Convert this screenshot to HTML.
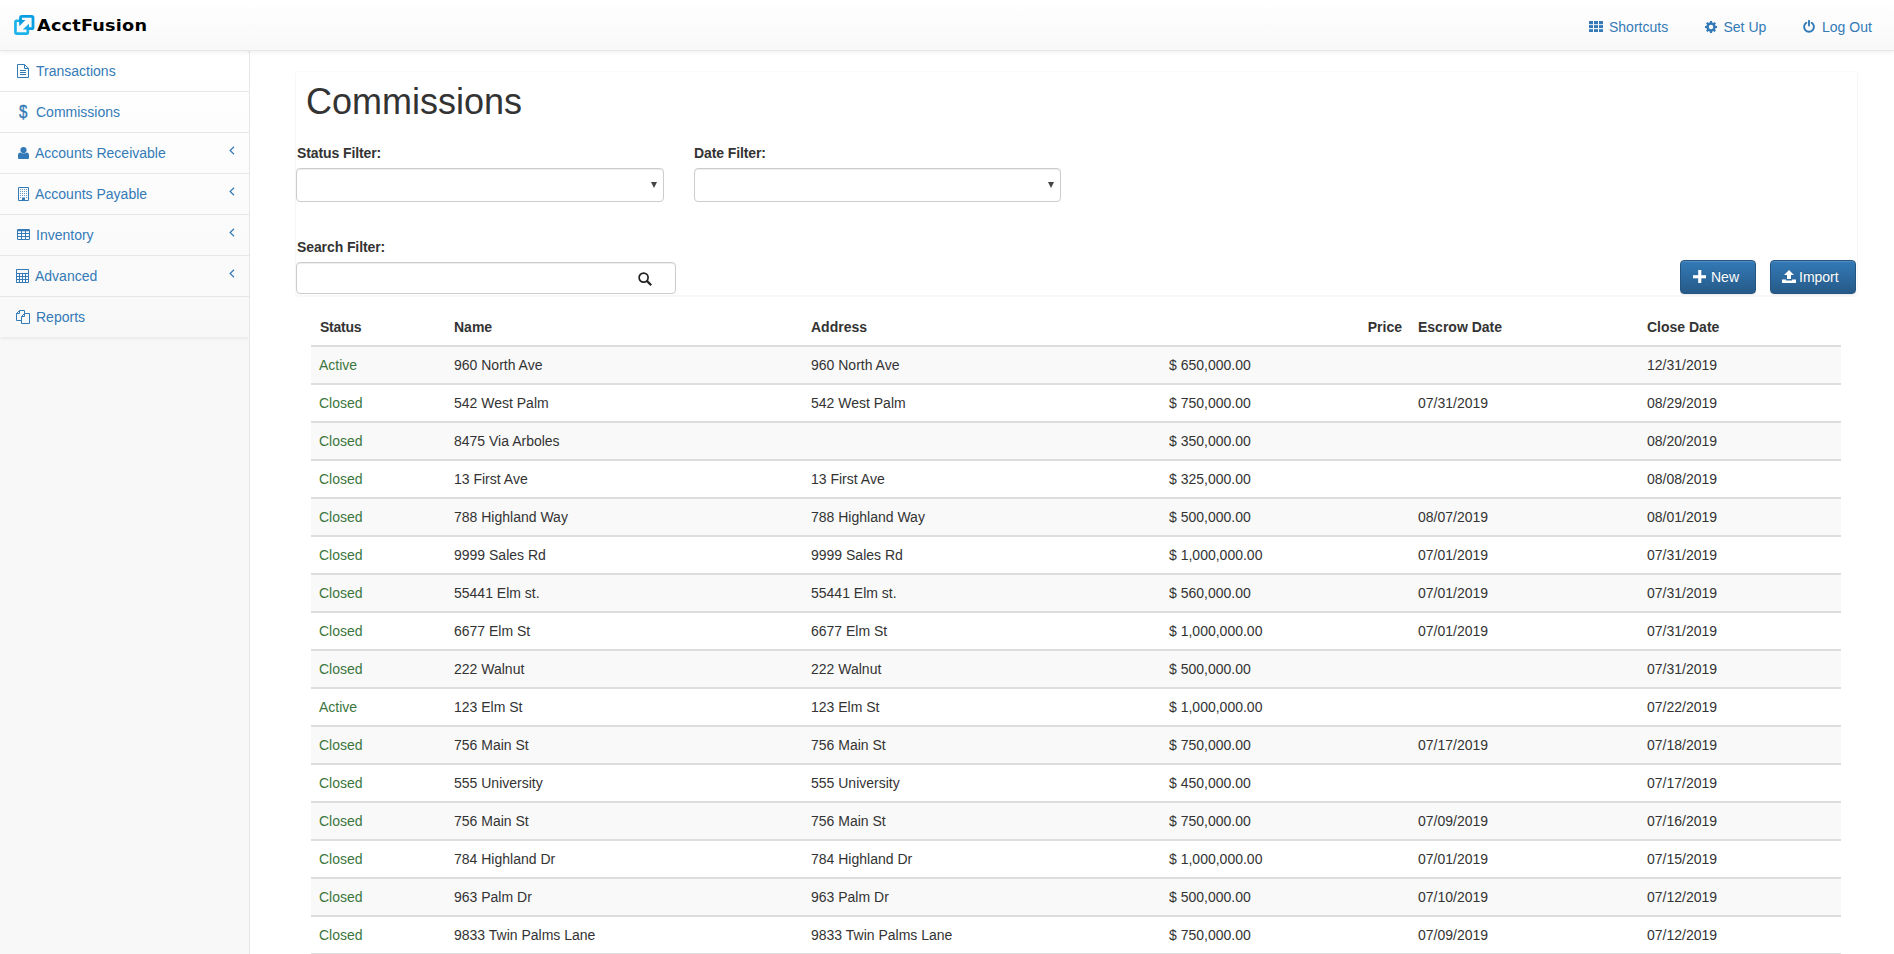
<!DOCTYPE html>
<html lang="en">
<head>
<meta charset="utf-8">
<title>AcctFusion - Commissions</title>
<style>
*{box-sizing:border-box}
html,body{margin:0;padding:0}
body{width:1894px;height:954px;overflow:hidden;background:#f8f8f8;font-family:"Liberation Sans",Arial,sans-serif;font-size:14px;line-height:20px;color:#333;position:relative}
a{color:#337ab7;text-decoration:none}
/* navbar */
#nav{z-index:10;position:absolute;left:0;top:0;width:1894px;height:51px;background:linear-gradient(to bottom,#fff 0,#f8f8f8 100%);border-bottom:1px solid #e7e7e7;box-shadow:inset 0 1px 0 rgba(255,255,255,.15),0 1px 5px rgba(0,0,0,.075)}
#brand{position:absolute;left:0;top:0;width:160px;height:50px;display:block}
#brand svg{position:absolute;left:0;top:0}
#brand span{position:absolute;left:37px;top:15px;font-family:"DejaVu Sans","Liberation Sans",sans-serif;font-weight:bold;font-size:16.5px;color:#000;letter-spacing:.2px;transform:scaleX(1.07);transform-origin:0 0;line-height:22px;white-space:nowrap}
#toplinks{position:absolute;left:0;top:0;width:1894px;height:50px;margin:0;padding:0;list-style:none}
#toplinks li{display:block}
#toplinks a{position:absolute;top:17px;line-height:20px;color:#337ab7;white-space:nowrap}
#toplinks svg{position:absolute}
/* sidebar */
#side{position:absolute;left:0;top:51px;width:249px;margin:0;padding:0;list-style:none;background:linear-gradient(to bottom,#fff 0,#f8f8f8 100%);border-radius:0 4px 0 0;box-shadow:0 1px 4px rgba(0,0,0,.09)}
#side li{display:block;height:41px;border-bottom:1px solid #e7e7e7;position:relative}
#side li a{display:block;padding:10px 15px;height:40px;line-height:20px;color:#337ab7;white-space:nowrap}
#side li svg{position:absolute;left:17px;top:13px}
#side li .t{position:absolute;top:10px}
#side li .arrow{position:absolute;left:229px;top:13px;width:6px;height:9px}
#side li .arrow svg{position:absolute;left:0;top:0}
/* page */
#page{position:absolute;left:249px;top:51px;width:1645px;height:903px;border-left:1px solid #e7e7e7;background:#fff}
#panel{position:absolute;left:295px;top:71px;width:1563px;height:225px;border:1px solid #f7f7f7;border-top-color:#fbfbfb;border-radius:4px;background:#fff;box-shadow:0 1px 1px rgba(0,0,0,.03)}
h1{position:absolute;left:306px;top:82px;margin:0;font-size:36px;line-height:40px;font-weight:500;font-weight:normal;color:#333}
label{position:absolute;letter-spacing:-.1px;font-weight:bold;font-size:14px;line-height:20px;color:#333}
.ctl{position:absolute;border:1px solid #ccc;border-radius:4px;background:#fff;box-shadow:inset 0 1px 1px rgba(0,0,0,.075)}
.ctl .caret{position:absolute;right:6px;top:13px;width:0;height:0;border-left:3.5px solid transparent;border-right:3.5px solid transparent;border-top:6px solid #444}
.btn{position:absolute;top:260px;height:34px;border:1px solid #245580;border-radius:4px;color:#fff;font-size:14px;line-height:20px;padding:6px 0;background:linear-gradient(to bottom,#337ab7 0,#265a88 100%);box-shadow:inset 0 1px 0 rgba(255,255,255,.15),0 1px 1px rgba(0,0,0,.075);text-shadow:0 -1px 0 rgba(0,0,0,.2);white-space:nowrap}
.btn svg{position:absolute}
.btn span{position:absolute;top:6px}
/* table */
table{position:absolute;left:311px;top:309px;width:1530px;border-bottom:2px solid #ddd;border-collapse:collapse;border-spacing:0;table-layout:fixed}
th,td{padding:8px;line-height:20px;text-align:left;vertical-align:top;white-space:nowrap;overflow:hidden}
th{font-weight:bold;vertical-align:bottom;border-bottom:2px solid #ddd;padding-left:9px}
tbody{border-top:2px solid #ddd}
tbody:nth-of-type(odd) tr{background:#f9f9f9}
td a{color:#3c763d}
</style>
</head>
<body>
<div id="nav">
  <a id="brand">
    <svg width="40" height="40" viewBox="0 0 40 40">
      <defs>
        <clipPath id="cb"><path clip-rule="evenodd" d="M0 0H40V40H0Z M16.800 22.600H26.400V32H16.800Z"/></clipPath>
        <clipPath id="cf"><path clip-rule="evenodd" d="M0 0H40V40H0Z M21.900 17.800H31.600V27.300H21.900Z"/></clipPath>
      </defs>
      <rect x="15.450" y="20.750" width="12.400" height="12.900" rx="1.300" fill="none" stroke="#1bb4ea" stroke-width="2.700" clip-path="url(#cf)"/>
      <rect x="20.500" y="16.400" width="12.500" height="12.300" rx="1.300" fill="none" stroke="#0b9ee1" stroke-width="2.800" clip-path="url(#cb)"/>
      <path d="M19.100 19.800L25.500 20L19.300 26.200Z" fill="#0b9ee1"/>
      <path d="M28.900 23.700L22.800 29.600H29.200Z" fill="#14aae6"/>
    </svg>
    <span>AcctFusion</span>
  </a>
  <ul id="toplinks">
    <li><a style="left:1609px">Shortcuts<svg style="left:-20px;top:4.200px" width="14" height="11.200" viewBox="0 0 14 11.200" fill="#337ab7"><rect x="0" y="0" width="4" height="3.200"/><rect x="5" y="0" width="4" height="3.200"/><rect x="10" y="0" width="4" height="3.200"/><rect x="0" y="4.100" width="4" height="3"/><rect x="5" y="4.100" width="4" height="3"/><rect x="10" y="4.100" width="4" height="3"/><rect x="0" y="8.200" width="4" height="3"/><rect x="5" y="8.200" width="4" height="3"/><rect x="10" y="8.200" width="4" height="3"/></svg></a></li>
    <li><a style="left:1723.500px">Set Up<svg style="left:-18.500px;top:4.200px" width="12" height="12" viewBox="0 0 24 24"><path fill="#337ab7" fill-rule="evenodd" d="M10 0h4l.6 3.200 1.900.8L19.200 2.100 21.900 4.800 20 7.500l.8 1.900L24 10v4l-3.200.6-.8 1.900 1.900 2.700-2.700 2.700L16.500 20l-1.900.8L14 24h-4l-.6-3.200-1.900-.8-2.700 1.900-2.700-2.700L4 16.500l-.8-1.900L0 14v-4l3.200-.6.800-1.900L2.100 4.800 4.800 2.100 7.500 4l1.900-.8zM12 7.600a4.400 4.400 0 100 8.800 4.400 4.400 0 000-8.800z"/></svg></a></li>
    <li><a style="left:1822px">Log Out<svg style="left:-18.600px;top:3.300px" width="12" height="12.400" viewBox="0 0 12 12.400" fill="none" stroke="#337ab7" stroke-width="1.900" stroke-linecap="round"><path d="M3.300 2.700A4.900 4.900 0 1 0 8.700 2.700"/><path d="M6 0.850V5.600"/></svg></a></li>
  </ul>
</div>
<ul id="side">
  <li><a><svg width="12" height="14" viewBox="0 0 12 14" fill="none" stroke="#337ab7" stroke-width="1"><path d="M0.500 0.500H7.500L11.500 4.500V13.500H0.500Z"/><path d="M7.500 0.500V4.500H11.500"/><path d="M3 6.500H9M3 8.500H9M3 10.500H9"/></svg><span class="t" style="left:36px">Transactions</span></a></li>
  <li><a><span class="t" style="left:18.500px;top:9.500px;font-weight:normal;-webkit-text-stroke:.4px #337ab7;font-size:17.500px;transform:scaleX(.86);transform-origin:0 0">$</span><span class="t" style="left:36px">Commissions</span></a></li>
  <li><a><svg style="left:17.700px;top:14px" width="11" height="12" viewBox="0 0 11 12" fill="#337ab7"><circle cx="5.500" cy="3.100" r="3.100"/><path d="M0 11V8.300C0 6.600 1 5.700 2.600 5.600C3.300 6.800 7.700 6.800 8.400 5.600C10 5.700 11 6.600 11 8.300V11A1 1 0 0 1 10 12H1A1 1 0 0 1 0 11Z"/></svg><span class="t" style="left:35px">Accounts Receivable</span><span class="arrow"><svg width="6" height="9" viewBox="0 0 6 9" fill="none" stroke="#337ab7" stroke-width="1.2"><path d="M5 0.800L1.100 4.500L5 8.200"/></svg></span></a></li>
  <li><a><svg style="left:18px;top:13px" width="11" height="14" viewBox="0 0 11 14"><path d="M0.500 0.500H10.500V13.500H0.500Z" fill="none" stroke="#337ab7" stroke-width="1"/><g fill="#337ab7" fill-opacity=".75"><rect x="2" y="2" width="1" height="1"/><rect x="4" y="2" width="1" height="1"/><rect x="6" y="2" width="1" height="1"/><rect x="8" y="2" width="1" height="1"/><rect x="2" y="4" width="1" height="1"/><rect x="4" y="4" width="1" height="1"/><rect x="6" y="4" width="1" height="1"/><rect x="8" y="4" width="1" height="1"/><rect x="2" y="6" width="1" height="1"/><rect x="4" y="6" width="1" height="1"/><rect x="6" y="6" width="1" height="1"/><rect x="8" y="6" width="1" height="1"/><rect x="2" y="8" width="1" height="1"/><rect x="4" y="8" width="1" height="1"/><rect x="6" y="8" width="1" height="1"/><rect x="8" y="8" width="1" height="1"/><rect x="2" y="10" width="1" height="1"/><rect x="8" y="10" width="1" height="1"/></g><rect x="4" y="10.500" width="3" height="3" fill="#337ab7"/></svg><span class="t" style="left:35px">Accounts Payable</span><span class="arrow"><svg width="6" height="9" viewBox="0 0 6 9" fill="none" stroke="#337ab7" stroke-width="1.2"><path d="M5 0.800L1.100 4.500L5 8.200"/></svg></span></a></li>
  <li><a><svg style="left:16.500px;top:14px" width="13" height="11" viewBox="0 0 13 11"><path fill="#337ab7" fill-rule="evenodd" d="M1.200 0H11.800A1.200 1.200 0 0 1 13 1.200V9.800A1.200 1.200 0 0 1 11.800 11H1.200A1.200 1.200 0 0 1 0 9.800V1.200A1.200 1.200 0 0 1 1.200 0ZM1 2.300V4.100H4V2.300ZM5 2.300V4.100H8V2.300ZM9 2.300V4.100H12V2.300ZM1 5.100V7H4V5.100ZM5 5.100V7H8V5.100ZM9 5.100V7H12V5.100ZM1 8V10H4V8ZM5 8V10H8V8ZM9 8V10H12V8Z"/></svg><span class="t" style="left:36px">Inventory</span><span class="arrow"><svg width="6" height="9" viewBox="0 0 6 9" fill="none" stroke="#337ab7" stroke-width="1.2"><path d="M5 0.800L1.100 4.500L5 8.200"/></svg></span></a></li>
  <li><a><svg style="left:16px;top:13px" width="13" height="14" viewBox="0 0 13 14"><path fill="#337ab7" fill-rule="evenodd" d="M0.800 0H12.200A.8 .8 0 0 1 13 .8V13.200A.8 .8 0 0 1 12.200 14H.8A.8 .8 0 0 1 0 13.200V.8A.8 .8 0 0 1 .8 0ZM1 1V4H12V1ZM1 5V7H3V5ZM4 5V7H6V5ZM7 5V7H9V5ZM10 5V7H12V5ZM1 8V10H3V8ZM4 8V10H6V8ZM7 8V10H9V8ZM10 8V10H12V8ZM1 11V13H3V11ZM4 11V13H6V11ZM7 11V13H9V11ZM10 11V13H12V11Z"/></svg><span class="t" style="left:35px">Advanced</span><span class="arrow"><svg width="6" height="9" viewBox="0 0 6 9" fill="none" stroke="#337ab7" stroke-width="1.2"><path d="M5 0.800L1.100 4.500L5 8.200"/></svg></span></a></li>
  <li style="border-bottom:0;height:40px"><a><svg style="left:16px;top:13px" width="14" height="14" viewBox="0 0 14 14" fill="none" stroke="#337ab7" stroke-width="1"><path d="M8.500 3.500V0.500H3.500L0.500 3.500V10.500H5.500"/><path d="M0.500 3.500H3.500V0.500"/><path d="M5.500 13.500V6.500L8.500 3.500H13.500V13.500Z"/><path d="M5.500 6.500H8.500V3.500"/></svg><span class="t" style="left:36px">Reports</span></a></li>
</ul>
<div id="page"></div>
<div id="panel"></div>
<h1>Commissions</h1>
<label style="left:297px;top:143px">Status Filter:</label>
<div class="ctl" style="left:296px;top:168px;width:368px;height:34px"><i class="caret"></i></div>
<label style="left:694px;top:143px">Date Filter:</label>
<div class="ctl" style="left:694px;top:168px;width:367px;height:34px"><i class="caret"></i></div>
<label style="left:297px;top:237px">Search Filter:</label>
<div class="ctl" style="left:296px;top:262px;width:380px;height:32px"><svg style="position:absolute;left:341px;top:9px" width="14" height="14" viewBox="0 0 14 14" fill="none" stroke="#222" stroke-width="1.700"><circle cx="5.600" cy="5.600" r="4.500"/><path d="M8.900 8.900L13.200 13.200" stroke-width="2.200"/></svg></div>
<a class="btn" style="left:1680px;width:76px"><svg style="left:11.500px;top:8.800px" width="13.500" height="13.500" viewBox="0 0 13 13" fill="#fff"><rect x="5" y="0" width="3" height="13"/><rect x="0" y="5" width="13" height="3"/></svg><span style="left:30px">New</span></a>
<a class="btn" style="left:1770px;width:86px"><svg style="left:11px;top:9px" width="14" height="13" viewBox="0 0 14 13" fill="#fff"><path d="M7 0L12 5H9V9H5V5H2Z"/><path d="M0 9.500H4V10.500H10V9.500H14V13H0Z"/></svg><span style="left:28px">Import</span></a>
<table>
<colgroup><col style="width:135px"><col style="width:357px"><col style="width:358px"><col style="width:249px"><col style="width:229px"><col style="width:202px"></colgroup>
<thead><tr><th style="letter-spacing:-.25px">Status</th><th style="padding-left:8px">Name</th><th style="padding-left:8px">Address</th><th style="text-align:right">Price</th><th style="padding-left:8px">Escrow Date</th><th style="padding-left:8px">Close Date</th></tr></thead>
<tbody><tr><td><a>Active</a></td><td>960 North Ave</td><td>960 North Ave</td><td>$ 650,000.00</td><td></td><td>12/31/2019</td></tr></tbody>
<tbody><tr><td><a>Closed</a></td><td>542 West Palm</td><td>542 West Palm</td><td>$ 750,000.00</td><td>07/31/2019</td><td>08/29/2019</td></tr></tbody>
<tbody><tr><td><a>Closed</a></td><td>8475 Via Arboles</td><td></td><td>$ 350,000.00</td><td></td><td>08/20/2019</td></tr></tbody>
<tbody><tr><td><a>Closed</a></td><td>13 First Ave</td><td>13 First Ave</td><td>$ 325,000.00</td><td></td><td>08/08/2019</td></tr></tbody>
<tbody><tr><td><a>Closed</a></td><td>788 Highland Way</td><td>788 Highland Way</td><td>$ 500,000.00</td><td>08/07/2019</td><td>08/01/2019</td></tr></tbody>
<tbody><tr><td><a>Closed</a></td><td>9999 Sales Rd</td><td>9999 Sales Rd</td><td>$ 1,000,000.00</td><td>07/01/2019</td><td>07/31/2019</td></tr></tbody>
<tbody><tr><td><a>Closed</a></td><td>55441 Elm st.</td><td>55441 Elm st.</td><td>$ 560,000.00</td><td>07/01/2019</td><td>07/31/2019</td></tr></tbody>
<tbody><tr><td><a>Closed</a></td><td>6677 Elm St</td><td>6677 Elm St</td><td>$ 1,000,000.00</td><td>07/01/2019</td><td>07/31/2019</td></tr></tbody>
<tbody><tr><td><a>Closed</a></td><td>222 Walnut</td><td>222 Walnut</td><td>$ 500,000.00</td><td></td><td>07/31/2019</td></tr></tbody>
<tbody><tr><td><a>Active</a></td><td>123 Elm St</td><td>123 Elm St</td><td>$ 1,000,000.00</td><td></td><td>07/22/2019</td></tr></tbody>
<tbody><tr><td><a>Closed</a></td><td>756 Main St</td><td>756 Main St</td><td>$ 750,000.00</td><td>07/17/2019</td><td>07/18/2019</td></tr></tbody>
<tbody><tr><td><a>Closed</a></td><td>555 University</td><td>555 University</td><td>$ 450,000.00</td><td></td><td>07/17/2019</td></tr></tbody>
<tbody><tr><td><a>Closed</a></td><td>756 Main St</td><td>756 Main St</td><td>$ 750,000.00</td><td>07/09/2019</td><td>07/16/2019</td></tr></tbody>
<tbody><tr><td><a>Closed</a></td><td>784 Highland Dr</td><td>784 Highland Dr</td><td>$ 1,000,000.00</td><td>07/01/2019</td><td>07/15/2019</td></tr></tbody>
<tbody><tr><td><a>Closed</a></td><td>963 Palm Dr</td><td>963 Palm Dr</td><td>$ 500,000.00</td><td>07/10/2019</td><td>07/12/2019</td></tr></tbody>
<tbody><tr><td><a>Closed</a></td><td>9833 Twin Palms Lane</td><td>9833 Twin Palms Lane</td><td>$ 750,000.00</td><td>07/09/2019</td><td>07/12/2019</td></tr></tbody></table></body></html>
